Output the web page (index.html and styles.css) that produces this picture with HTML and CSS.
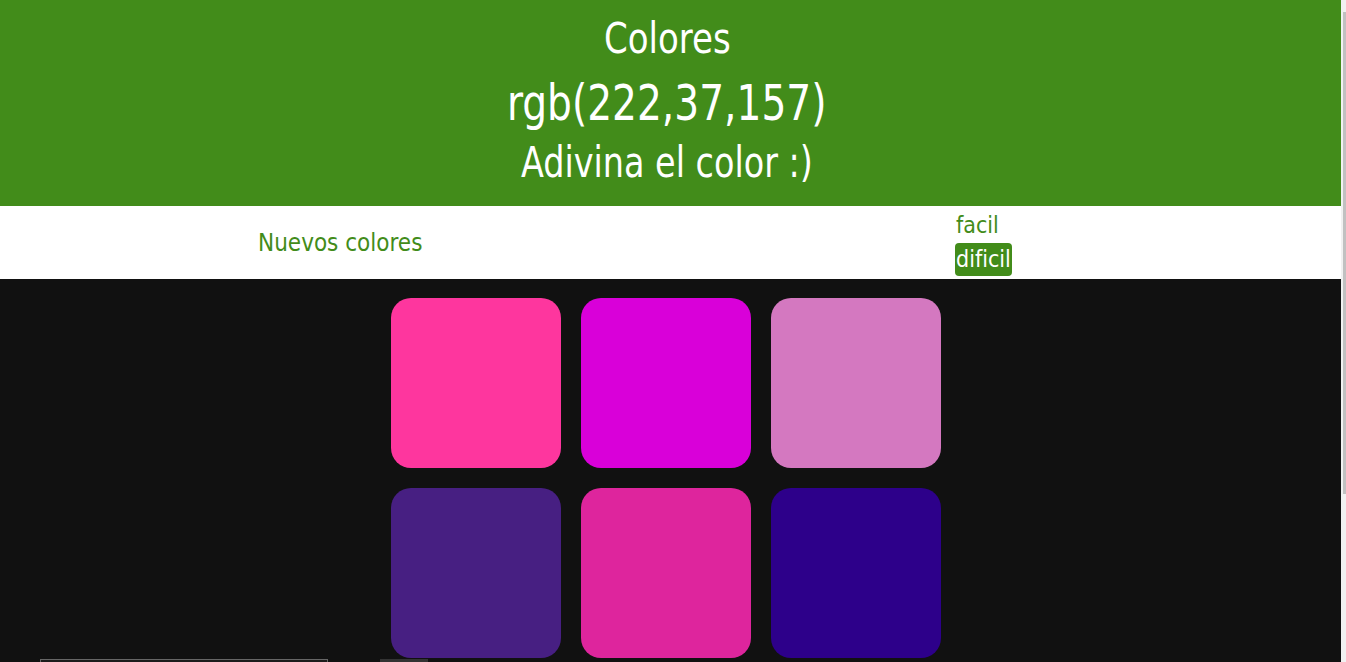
FILE: index.html
```html
<!DOCTYPE html>
<html lang="es">
<head>
<meta charset="utf-8">
<title>Colores</title>
<link rel="stylesheet" href="styles.css">
</head>
<body>
<header class="header">
  <h1 class="title"><span class="narrow n1">Colores</span></h1>
  <h2 class="rgb"><span class="narrow n2">rgb(222,37,157)</span></h2>
  <h3 class="subtitle"><span class="narrow n3">Adivina el color :)</span></h3>
</header>
<nav class="nav">
  <button class="reset">Nuevos colores</button>
  <div class="modes">
    <button class="mode">facil</button>
    <button class="mode selected">dificil</button>
  </div>
</nav>
<main class="board">
  <div class="grid">
    <div class="square" style="background: rgb(254,54,158)"></div>
    <div class="square" style="background: rgb(217,0,217)"></div>
    <div class="square" style="background: rgb(212,120,192)"></div>
    <div class="square" style="background: rgb(71,31,130)"></div>
    <div class="square" style="background: rgb(222,37,157)"></div>
    <div class="square" style="background: rgb(45,0,138)"></div>
  </div>
  <div class="footer">
    <div class="bar bar-a"></div>
    <div class="bar bar-b"></div>
  </div>
</main>
<div class="scroll-track"><div class="scroll-thumb"></div></div>
</body>
</html>
```
FILE: styles.css
```css
html::-webkit-scrollbar { display: none; }

* { box-sizing: border-box; }

html { background: #f1f1f1; }

body {
  margin: 0 5px 0 0;
  background: #111111;
  font-family: "DejaVu Sans Condensed", "Liberation Sans Narrow", "Liberation Sans", sans-serif;
  color: #fff;
}

.scroll-track {
  position: fixed;
  top: 0;
  right: 0;
  width: 5px;
  height: 100%;
  background: #f1f1f1;
}

.scroll-thumb {
  margin: 12px 0 0 2px;
  width: 3px;
  height: 482px;
  background: #c1c1c1;
}

.header {
  background: #428c1a;
  height: 206px;
  text-align: center;
  padding-top: 18px;
  padding-right: 7px;
}

.title, .rgb, .subtitle {
  margin: 0;
  font-weight: normal;
  line-height: 1;
}

.narrow { display: inline-block; }
.n1 { transform: scaleX(0.9); }
.n2 { transform: scaleX(0.87); }
.n3 { transform: scaleX(0.885); }

.title { font-size: 42px; height: 54px; }
.rgb { font-size: 50px; height: 66px; padding-top: 6px; }
.subtitle { font-size: 42px; padding-top: 4px; }

.nav {
  background: #fff;
  height: 73px;
  display: flex;
  align-items: center;
  padding-left: 258px;
}

button {
  font-family: inherit;
  border: none;
  background: none;
  cursor: pointer;
  color: #428c1a;
  padding: 0;
}

.reset {
  font-size: 24px;
  width: 697px;
  text-align: left;
}

.modes {
  display: flex;
  flex-direction: column;
  align-items: flex-start;
}

.mode {
  font-size: 23px;
  line-height: 30px;
  padding: 0 1px;
  border-radius: 4px;
}

.mode.selected {
  background: #428c1a;
  color: #fff;
  height: 33px;
  margin-top: 3px;
}

.board { padding-top: 19px; }

.grid {
  width: 550px;
  margin-left: 391px;
  display: grid;
  grid-template-columns: repeat(3, 170px);
  gap: 20px;
}

.square {
  height: 170px;
  border-radius: 20px;
}

.footer {
  display: flex;
  margin-top: 1px;
  padding-left: 40px;
  gap: 52px;
  height: 260px;
}

.bar {
  height: 40px;
  background: #1c1c1c;
}

.bar-a { width: 288px; border: 1px solid #666; }
.bar-b { width: 48px; background: #333; }
```
